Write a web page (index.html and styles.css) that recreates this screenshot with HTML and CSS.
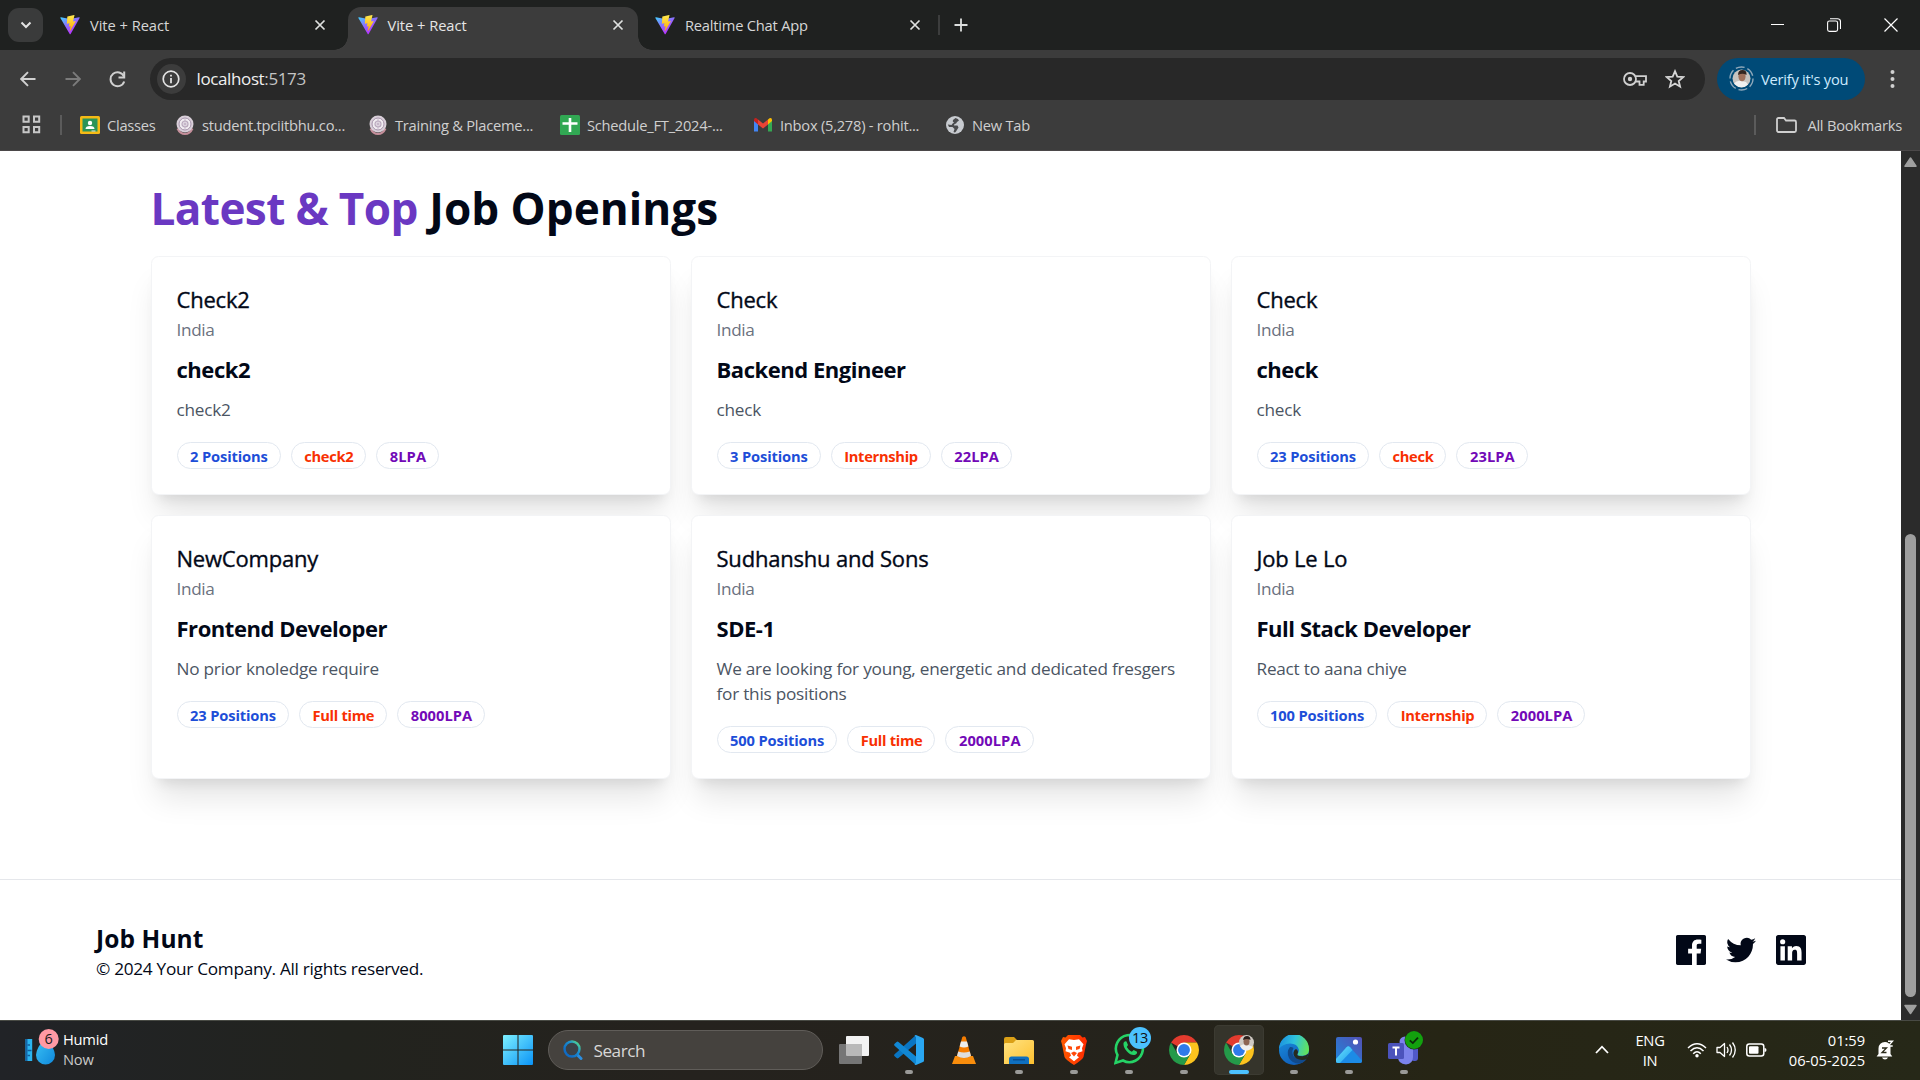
FILE: index.html
```
<!DOCTYPE html>
<html lang="en">
<head>
<meta charset="utf-8">
<title>Vite + React</title>
<link rel="stylesheet" href="styles.css">
</head>
<body>
<svg class="defs" width="0" height="0" aria-hidden="true">
  <defs>
    <linearGradient id="vite-a" x1="0" y1="0" x2="0.7" y2="1"><stop offset="0" stop-color="#41d1ff"/><stop offset="0.5" stop-color="#8f6bff"/><stop offset="1" stop-color="#c026ff"/></linearGradient>
    <linearGradient id="vite-b" x1="0" y1="0" x2="0" y2="1"><stop offset="0" stop-color="#ffea50"/><stop offset="1" stop-color="#ffa800"/></linearGradient>
    <linearGradient id="win" x1="0" y1="0" x2="1" y2="1"><stop offset="0" stop-color="#7df0ff"/><stop offset="1" stop-color="#0a93f7"/></linearGradient>
    <linearGradient id="lens" x1="1" y1="0" x2="0.2" y2="0.8"><stop offset="0" stop-color="#62ea7a"/><stop offset="0.45" stop-color="#1a8fd0"/><stop offset="1" stop-color="#0f6bc4"/></linearGradient>
    <linearGradient id="folder" x1="0" y1="0" x2="1" y2="1"><stop offset="0" stop-color="#ffe382"/><stop offset="1" stop-color="#fdc02f"/></linearGradient>
    <linearGradient id="brave" x1="0" y1="0" x2="1" y2="0"><stop offset="0" stop-color="#ff5a00"/><stop offset="1" stop-color="#ff2a00"/></linearGradient>
    <linearGradient id="edge-a" x1="0" y1="0.3" x2="1" y2="0.5"><stop offset="0" stop-color="#1b8fe0"/><stop offset="0.5" stop-color="#2fc3dc"/><stop offset="1" stop-color="#62e35c"/></linearGradient>
    <linearGradient id="edge-b" x1="0" y1="0" x2="0.6" y2="1"><stop offset="0" stop-color="#1b93e2"/><stop offset="1" stop-color="#0f5cb8"/></linearGradient>
    <linearGradient id="photo" x1="1" y1="0" x2="0" y2="1"><stop offset="0" stop-color="#5350b4"/><stop offset="1" stop-color="#1f86dc"/></linearGradient>
    <linearGradient id="hill" x1="0" y1="0" x2="1" y2="1"><stop offset="0" stop-color="#6fe4fb"/><stop offset="1" stop-color="#1a9df0"/></linearGradient>
    <linearGradient id="drop" x1="0" y1="0" x2="1" y2="1"><stop offset="0" stop-color="#3cc4f5"/><stop offset="1" stop-color="#0f88dc"/></linearGradient>
    <symbol id="vite" viewBox="0 0 32 32"><path d="M31.4 4.9 17 30.5c-.3.6-1.2.6-1.5 0L.6 4.9C.3 4.300.8 3.500 1.500 3.700l14.600 2.600 14.400-2.600c.7-.1 1.200.6.900 1.200z" fill="url(#vite-a)"/><path d="M22.700.1 12 2.200c-.2 0-.3.2-.3.400l-.700 11c0 .3.200.5.500.4l3-.7c.3-.1.500.2.500.5l-.900 4.300c-.1.3.200.5.500.4l1.800-.500c.3-.1.600.1.500.4l-1.400 6.800c-.1.400.5.700.7.300L25 10.200c.1-.3-.1-.6-.4-.6l-3.100.6c-.3.1-.5-.2-.5-.5l2.100-9.100c.1-.3-.1-.5-.4-.5z" fill="url(#vite-b)"/></symbol>
    <symbol id="x" viewBox="0 0 12 12"><path d="M1.500 1.500l9 9M10.500 1.500l-9 9" stroke="#dfe1e0" stroke-width="1.700" fill="none"/></symbol>
    <symbol id="seal" viewBox="0 0 20 20"><path d="M2.500 13.500Q5 19 10 19t7.500-5.500" fill="none" stroke="#c58f9b" stroke-width="2"/><circle cx="10" cy="9" r="8.500" fill="#d9cfd9"/><circle cx="10" cy="9" r="6" fill="#f1ecf1" stroke="#a693ab" stroke-width="1"/><circle cx="10" cy="9" r="3" fill="none" stroke="#b9a8bd" stroke-width="1.200"/><path d="M10 4v10M7 7l6 4M13 7l-6 4" stroke="#b9a8bd" stroke-width=".7"/></symbol>
    <symbol id="chrome" viewBox="0 0 48 48"><path d="M24 24 3.220 12A24 24 0 0 1 44.780 12H24z" fill="#e33b2e"/><path d="M24 12h20.780A24 24 0 0 1 24 48l10.390-18z" fill="#fcc31e"/><path d="M34.390 30 24 48A24 24 0 0 1 3.220 12l10.390 18z" fill="#249a49"/><circle cx="24" cy="24" r="12" fill="#fff"/><circle cx="24" cy="24" r="9.500" fill="#2f7bea"/></symbol>
  </defs>
</svg>

<header class="browser">
  <div class="tabstrip">
    <button class="tab-search"><svg width="12" height="8" viewBox="0 0 12 8"><path d="M1.500 1.500 6 6l4.500-4.500" fill="none" stroke="#e3e3e3" stroke-width="2"/></svg></button>
    <div class="tab"><svg class="favicon"><use href="#vite"/></svg><span class="tab-title">Vite + React</span><svg class="tab-close"><use href="#x"/></svg></div>
    <div class="tab tab-active"><svg class="favicon"><use href="#vite"/></svg><span class="tab-title">Vite + React</span><svg class="tab-close"><use href="#x"/></svg></div>
    <div class="tab"><svg class="favicon"><use href="#vite"/></svg><span class="tab-title tab-title-long">Realtime Chat App</span><svg class="tab-close"><use href="#x"/></svg></div>
    <div class="new-tab"><svg width="14" height="14" viewBox="0 0 14 14"><path d="M7 .5v13M.5 7h13" stroke="#dcdedd" stroke-width="1.800"/></svg></div>
    <div class="window-buttons">
      <svg width="14" height="14" viewBox="0 0 14 14"><path d="M1 6.500h13" stroke="#fff"/></svg>
      <svg width="14" height="14" viewBox="0 0 14 14"><rect x=".6" y="3" width="10" height="10.400" rx="1.800" fill="none" stroke="#fff" stroke-width="1.100"/><path d="M3 .7h7.500q3 0 3 3V11" fill="none" stroke="#fff" stroke-width="1.100"/></svg>
      <svg width="14" height="14" viewBox="0 0 14 14"><path d="M.5.5l13 13M13.500.5l-13 13" stroke="#fff" stroke-width="1.200"/></svg>
    </div>
  </div>

  <div class="toolbar">
    <div class="nav">
      <svg width="16" height="16" viewBox="0 0 16 16"><path d="M15.500 8H1.500M8 1.200 1.200 8 8 14.800" fill="none" stroke="#d0d0d0" stroke-width="1.900"/></svg>
      <svg width="16" height="16" viewBox="0 0 16 16"><path d="M.5 8h14M8 1.200 14.800 8 8 14.800" fill="none" stroke="#7b7b7b" stroke-width="1.900"/></svg>
      <svg width="17" height="17" viewBox="0 0 17 17"><path d="M15 5.500A7 7 0 1 0 15.200 10.500" fill="none" stroke="#d0d0d0" stroke-width="2"/><path d="M15.200.5v6H9.500" fill="none" stroke="#d0d0d0" stroke-width="2"/></svg>
    </div>
    <div class="address">
      <span class="site-info"><svg width="18" height="18" viewBox="0 0 18 18"><circle cx="9" cy="9" r="7.800" fill="none" stroke="#e3e3e3" stroke-width="1.700"/><path d="M9 8v5.200M9 4.700v1.800" stroke="#e3e3e3" stroke-width="1.800"/></svg></span>
      <span class="url">localhost<span class="port">:5173</span></span>
      <svg class="key" width="24" height="14" viewBox="0 0 24 14"><circle cx="7" cy="7" r="6" fill="none" stroke="#d0d0d0" stroke-width="1.800"/><circle cx="7" cy="7" r="2.200" fill="#d0d0d0"/><path d="M12.500 4.200H23v5.300h-2.300v3.300h-4.200V9.500h-4" fill="none" stroke="#d0d0d0" stroke-width="1.800"/></svg>
      <svg class="star" width="20" height="20" viewBox="0 0 20 20"><path d="M10 2.200l2.300 5.400 5.900.5-4.500 3.900 1.400 5.700-5.100-3.100-5.100 3.100 1.400-5.700L1.800 8.100l5.900-.5z" fill="none" stroke="#d5d5d5" stroke-width="1.800"/></svg>
    </div>
    <button class="profile">
      <svg width="25" height="25" viewBox="0 0 25 25"><circle cx="12.500" cy="12.500" r="11.500" fill="none" stroke="#8fa9bb" stroke-width="1.400" stroke-dasharray="9 3"/><circle cx="12.500" cy="12.500" r="9" fill="#c8c4c0"/><path d="M5 17.500Q8 14 12 15l5 1 2 2.500a9 9 0 0 1-13 0z" fill="#f0f0f0"/><ellipse cx="13" cy="10.500" rx="3.600" ry="4.800" fill="#a0705a"/><path d="M9 9q0-5 4.500-5T17.500 9q-4-2.500-8.500 0z" fill="#33251f"/></svg>
      <span>Verify it's you</span>
    </button>
    <svg class="dots" width="5" height="20" viewBox="0 0 5 20"><circle cx="2.500" cy="3" r="2" fill="#d0d0d0"/><circle cx="2.500" cy="10" r="2" fill="#d0d0d0"/><circle cx="2.500" cy="17" r="2" fill="#d0d0d0"/></svg>
  </div>

  <div class="bookmarks">
    <svg class="apps" width="19" height="19" viewBox="0 0 19 19"><path d="M1.500 1.500h5.200v5.200H1.500zM12 1.500h5.200v5.200H12zM1.500 12h5.200v5.200H1.500zM12 12h5.200v5.200H12z" fill="none" stroke="#c7c7c7" stroke-width="2"/></svg>
    <div class="bookmark-list">
      <div class="bookmark"><svg viewBox="0 0 20 20"><rect y="1" width="20" height="18" rx="1.500" fill="#f5ba15"/><rect x="2.500" y="3.500" width="15" height="13" fill="#2a9458"/><circle cx="10" cy="8" r="2.200" fill="#fff"/><path d="M5.500 14q0-3 4.500-3t4.500 3z" fill="#fff"/><path d="M11.500 15.500h4v1h-4z" fill="#e8e8e8"/></svg><span>Classes</span></div>
      <div class="bookmark"><svg viewBox="0 0 20 20"><use href="#seal"/></svg><span>student.tpciitbhu.co...</span></div>
      <div class="bookmark"><svg viewBox="0 0 20 20"><use href="#seal"/></svg><span>Training &amp; Placeme...</span></div>
      <div class="bookmark"><svg viewBox="0 0 20 20"><rect width="20" height="20" rx="1.500" fill="#31a853"/><path d="M10 3v14M2.500 8.500h15" stroke="#fff" stroke-width="2.600"/></svg><span>Schedule_FT_2024-...</span></div>
      <div class="bookmark"><svg viewBox="0 0 20 20"><path d="M1 5v11.500h4V8z" fill="#4285f4"/><path d="M19 5v11.500h-4V8z" fill="#34a853"/><path d="M1 6V5q0-2.500 2.500-1.700L5 4.500v5z" fill="#c5221f"/><path d="M19 6V5q0-2.500-2.500-1.700L15 4.500v5z" fill="#fbbc04"/><path d="M5 4.500l5 4 5-4v5l-5 4-5-4z" fill="#ea4335"/></svg><span>Inbox (5,278) - rohit...</span></div>
      <div class="bookmark"><svg viewBox="0 0 20 20"><circle cx="10" cy="10" r="9" fill="#c8cbd0"/><path d="M10.500 3q3 .5 3.500 2.500l-2 1.500q-.5 2-2.500 2L9 10.500h3.500l1 2-2.500 4Q10 18 8.500 17l1-3-2-2H4L2.800 9.500 6.500 10q1-2 2.500-2.500Q7 6.500 8 5z" fill="#4a4b4d"/></svg><span>New Tab</span></div>
    </div>
    <div class="all-bookmarks"><svg width="21" height="16" viewBox="0 0 21 16"><path d="M1 13V2.500Q1 1 2.500 1H8l2 2.500h8.500Q20 3.500 20 5v8.500q0 1.500-1.500 1.500H2.500Q1 15 1 13z" fill="none" stroke="#d0d0d0" stroke-width="1.800"/></svg><span>All Bookmarks</span></div>
  </div>
</header>

<div class="viewport">
  <div class="page">
    <main class="jobs">
      <h1 class="jobs-heading"><span class="accent">Latest &amp; Top</span> Job Openings</h1>
      <div class="job-grid">
        <article class="job"><h2 class="company">Check2</h2><p class="place">India</p><h3 class="role">check2</h3><p class="about">check2</p><div class="badges"><span class="badge positions">2 Positions</span><span class="badge kind">check2</span><span class="badge pay">8LPA</span></div></article>
        <article class="job"><h2 class="company">Check</h2><p class="place">India</p><h3 class="role">Backend Engineer</h3><p class="about">check</p><div class="badges"><span class="badge positions">3 Positions</span><span class="badge kind">Internship</span><span class="badge pay">22LPA</span></div></article>
        <article class="job"><h2 class="company">Check</h2><p class="place">India</p><h3 class="role">check</h3><p class="about">check</p><div class="badges"><span class="badge positions">23 Positions</span><span class="badge kind">check</span><span class="badge pay">23LPA</span></div></article>
        <article class="job"><h2 class="company">NewCompany</h2><p class="place">India</p><h3 class="role">Frontend Developer</h3><p class="about">No prior knoledge require</p><div class="badges"><span class="badge positions">23 Positions</span><span class="badge kind">Full time</span><span class="badge pay">8000LPA</span></div></article>
        <article class="job"><h2 class="company">Sudhanshu and Sons</h2><p class="place">India</p><h3 class="role">SDE-1</h3><p class="about">We are looking for young, energetic and dedicated fresgers for this positions</p><div class="badges"><span class="badge positions">500 Positions</span><span class="badge kind">Full time</span><span class="badge pay">2000LPA</span></div></article>
        <article class="job"><h2 class="company">Job Le Lo</h2><p class="place">India</p><h3 class="role">Full Stack Developer</h3><p class="about">React to aana chiye</p><div class="badges"><span class="badge positions">100 Positions</span><span class="badge kind">Internship</span><span class="badge pay">2000LPA</span></div></article>
      </div>
    </main>
    <footer class="footer">
      <div class="footer-text">
        <h2 class="brand">Job Hunt</h2>
        <p class="copyright">© 2024 Your Company. All rights reserved.</p>
      </div>
      <div class="social">
        <svg viewBox="0 0 24 24"><path d="M22.676 0H1.324C.593 0 0 .593 0 1.324v21.352C0 23.408.593 24 1.324 24h11.494v-9.294H9.689v-3.621h3.129V8.410c0-3.099 1.894-4.785 4.659-4.785 1.325 0 2.464.097 2.796.141v3.240h-1.921c-1.500 0-1.792.721-1.792 1.771v2.311h3.584l-.465 3.630H16.560V24h6.115c.733 0 1.325-.592 1.325-1.324V1.324C24 .593 23.408 0 22.676 0"/></svg>
        <svg viewBox="0 0 24 24"><path d="M24 4.557a9.930 9.930 0 0 1-2.828.775 4.932 4.932 0 0 0 2.165-2.724 9.864 9.864 0 0 1-3.127 1.195 4.916 4.916 0 0 0-8.380 4.482A13.944 13.944 0 0 1 1.671 3.149a4.916 4.916 0 0 0 1.523 6.574 4.903 4.903 0 0 1-2.229-.616c-.054 2.281 1.581 4.415 3.949 4.890a4.935 4.935 0 0 1-2.224.084 4.928 4.928 0 0 0 4.600 3.419A9.900 9.900 0 0 1 0 19.540a13.940 13.940 0 0 0 7.548 2.212c9.142 0 14.307-7.721 13.995-14.646A10.025 10.025 0 0 0 24 4.557z"/></svg>
        <svg viewBox="0 0 24 24"><path d="M20.447 20.452h-3.554v-5.569c0-1.328-.027-3.037-1.852-3.037-1.853 0-2.136 1.445-2.136 2.939v5.667H9.351V9h3.414v1.561h.046c.477-.9 1.637-1.850 3.370-1.850 3.601 0 4.267 2.370 4.267 5.455v6.286zM5.337 7.433a2.062 2.062 0 1 1 0-4.124 2.062 2.062 0 0 1 0 4.124zM7.114 20.452H3.558V9h3.556v11.452zM22.225 0H1.771C.792 0 0 .774 0 1.729v20.542C0 23.227.792 24 1.771 24h20.451C23.200 24 24 23.227 24 22.271V1.729C24 .774 23.200 0 22.222 0h.003z"/></svg>
      </div>
    </footer>
  </div>
  <div class="scrollbar">
    <svg width="13" height="11" viewBox="0 0 13 11"><path d="M6.500 1 12 9.200H1z" fill="#9f9f9f" stroke="#9f9f9f" stroke-width="1.500" stroke-linejoin="round"/></svg>
    <span class="thumb"></span>
    <svg width="13" height="11" viewBox="0 0 13 11"><path d="M6.500 9.500 12 1.500H1z" fill="#9f9f9f" stroke="#9f9f9f" stroke-width="1.500" stroke-linejoin="round"/></svg>
  </div>
</div>

<div class="taskbar">
  <div class="weather">
    <svg width="36" height="40" viewBox="0 0 36 40"><rect x="1.500" y="10" width="6.700" height="22" fill="#2bb5f0"/><path d="M1.500 10h2v22h-2z" fill="#1565a8"/><path d="M3.500 16H6M3.500 21.500h4M3.500 26.500H6" stroke="#11609f" stroke-width="1.300"/><path d="M21.500 8q-9.500 11.500-9.500 18a9.500 9.500 0 0 0 19 0Q31 19.500 21.500 8z" fill="url(#drop)"/><circle cx="24.700" cy="10" r="10" fill="#ff99a4"/><text class="count" x="24.500" y="15" fill="#1a1a1a">6</text></svg>
    <div class="weather-text"><span>Humid</span><span class="dim">Now</span></div>
  </div>
  <div class="apps-row">
    <svg class="start" width="30" height="30" viewBox="0 0 29 29"><path d="M0 1q0-1 1-1h13v14H0zM15 0h13q1 0 1 1v13H15zM0 15h14v14H1q-1 0-1-1zM15 15h14v13q0 1-1 1H15z" fill="url(#win)"/></svg>
    <div class="search"><svg width="20" height="20" viewBox="0 0 20 20"><path d="M13.500 14 18 18.500" stroke="#2b8ee0" stroke-width="3" stroke-linecap="round"/><circle cx="9" cy="9" r="7.500" fill="#3b4147" stroke="url(#lens)" stroke-width="2.400"/></svg><span>Search</span></div>
    <div class="app"><svg viewBox="0 0 30 30"><path d="M8 1h21q1 0 1 1v18q0 1-1 1H8q-1 0-1-1V2q0-1 1-1z" fill="#f2f2f2"/><rect y="9" width="23" height="20" rx="1" fill="#767676"/><path d="M7 9h16v12H8q-1 0-1-1z" fill="#b9b9b9"/></svg></div>
    <div class="app running"><svg viewBox="0 0 30 30"><path d="M22 0v8.500L4.500 23q-1 .8-1.900 0l-2-1.800q-1-.9 0-1.900z" fill="#0a75c2"/><path d="M22 30v-8.500L4.500 7q-1-.8-1.900 0l-2 1.800q-1 .9 0 1.900z" fill="#1187d4"/><path d="M22 0l7 3q1 .6 1 1.500v21q0 1-1 1.500l-7 3q-1 0-1.500-.8L22 28V2l-1.500-1.200Q21 0 22 0z" fill="#2aa7f2"/></svg></div>
    <div class="app"><svg viewBox="0 0 30 30"><path d="M6 21h18l3 8H3z" fill="#f98d0c"/><path d="M13.300 2q1.700-1.500 3.400 0L22 21q-7 4.500-14 0z" fill="#f57c00"/><path d="M12 6.500h6l1.400 5q-4.400 1.800-8.800 0z" fill="#ececec"/><path d="M9.200 16.500q5.800 2 11.600 0L22 21q-7 4-14 0z" fill="#dedede"/></svg></div>
    <div class="app running"><svg viewBox="0 0 30 30"><path d="M0 4q0-2 2-2h8l3 3-2 5H0z" fill="#dba016"/><path d="M12 5h16.500Q30 5 30 6.500V29H0V9.500Q0 8 1.500 8H9z" fill="url(#folder)"/><path d="M5 29v-5q0-2.500 2.500-2.500h15Q25 21.500 25 24v5z" fill="#0f70c0"/><path d="M9 24.800h12" stroke="#0a4a8c" stroke-width="1.300"/></svg></div>
    <div class="app running"><svg viewBox="0 0 30 30"><path d="M9 0h12l2.500 2.500 2.500-.5L28 6l-1 3.500-2.500 12.500Q23 25 15 30 7 25 5.500 22L3 9.500 2 6l2-4 2.500.5z" fill="url(#brave)"/><path d="M15 5l5-.8 4.500 5-1.500 4 .5 3-4.500 1.500-1 3 2 1.500-5 4-5-4 2-1.500-1-3L6.500 16.200l.5-3-1.500-4 4.500-5z" fill="#fff"/><path d="M8.500 10.500l4.500 1.200v3.300l-3.500-1zM21.500 10.500 17 11.700V15l3.500-1zM12 18l3-1.500 3 1.500-3 3.500z" fill="#ff4a0a"/></svg></div>
    <div class="app running"><svg class="wide" viewBox="0 0 38 38"><path d="M1.500 36.500l2-8a13.500 13.500 0 1 1 5.500 5.500z" transform="translate(0 -.5)" fill="none" stroke="#25d366" stroke-width="2.600"/><path d="M9.500 16q1-2.300 3-1.500l1.500 3.500-1.200 2q1.700 3.200 5 4.700l1.900-1.700 3.300 1.700q.5 2.500-2.500 3.300-4 .5-7.500-3.500-4-4-3.500-8.500z" fill="#25d366"/><circle cx="26" cy="11" r="11" fill="#4cc2ff"/><text class="count" x="26" y="16" fill="#111">13</text></svg></div>
    <div class="app running"><svg viewBox="0 0 30 30"><use href="#chrome"/></svg></div>
    <div class="app running focused"><svg viewBox="0 0 30 30"><use href="#chrome"/><circle cx="22.500" cy="7.500" r="7.500" fill="#cfcac4"/><path d="M16 11q3-2.500 6-1.500l5 1.500 2 1a7.500 7.500 0 0 1-11 2z" fill="#f0efee"/><ellipse cx="22.500" cy="6.500" rx="3" ry="4" fill="#8d6553"/><path d="M19 5q.5-4 4-4t3.500 4q-3.500-2-7.500 0z" fill="#2b201c"/></svg></div>
    <div class="app running"><svg viewBox="0 0 30 30"><circle cx="15" cy="15" r="15" fill="url(#edge-b)"/><path d="M0 14A15 15 0 0 1 30 14q.5 6.500-6.500 6.800-5.500.2-5-1.800 1.800-2 1.300-4.500Q18.500 8.500 11 8.500 3 9 0 14z" fill="url(#edge-a)"/><path d="M11 12q-4 5-1 11 4 7 13 5 3-1.300 5-4.500-6.500 2.500-12-1-4.500-3.500-1.500-9.500-2-1.500-3.500-1z" fill="#114a8b"/><path d="M18.500 19q-1.500 2.200 5 2.200 4-.2 5.900-2.600L28 24q-6 2-10.500-.5-3.500-2.500-3-6 .5-3 2.500-3.500 3 2 1.500 5z" fill="#262a1e"/></svg></div>
    <div class="app running"><svg viewBox="0 0 30 30"><rect x="2" y="2" width="26" height="26" rx="2" fill="url(#photo)"/><path d="M2 24 12.500 12.200q1.800-1.700 3.600 0L28 25.500V26q0 2-2 2H4q-2 0-2-2z" fill="#1c8be6"/><path d="M2 24 12.500 12.200q1.800-1.700 3.600 0l2.400 2.700L6 28H4q-2 0-2-2z" fill="url(#hill)"/><circle cx="21.500" cy="7" r="2.600" fill="#fff"/></svg></div>
    <div class="app running"><svg class="teams" viewBox="0 0 38 34"><circle cx="18" cy="11" r="5.500" fill="#7b83eb"/><rect x="24" y="15" width="7" height="15" rx="3" fill="#5059c9"/><path d="M11 15h15v11q0 7-7 7.500-8-.5-8-7.500z" fill="#7b83eb"/><rect x="1" y="12" width="16" height="16" rx="1.500" fill="#4b53bc"/><path d="M5.500 16.500h7M9 16.500v8" stroke="#fff" stroke-width="2"/><circle cx="27" cy="9" r="9.500" fill="#23241a"/><circle cx="27" cy="9" r="9" fill="#13a10e"/><path d="M22.800 9.300l3 2.800 5.200-5.500" fill="none" stroke="#0b2b09" stroke-width="1.800"/></svg></div>
  </div>
  <div class="tray">
    <svg class="tray-more" width="14" height="9" viewBox="0 0 14 9"><path d="M1 8l6-6.300L13 8" fill="none" stroke="#fff" stroke-width="1.800"/></svg>
    <div class="lang"><span>ENG</span><span>IN</span></div>
    <div class="status">
      <svg width="20" height="16" viewBox="0 0 20 16"><path d="M1 6q9-8.500 18 0M3.500 9q6.500-6.500 13 0M6.200 11.800q3.800-4 7.600 0" fill="none" stroke="#fff" stroke-width="1.500"/><circle cx="10" cy="13.800" r="1.700" fill="#fff"/></svg>
      <svg width="21" height="18" viewBox="0 0 21 18"><path d="M1 6.500h3L8.500 2.500v13L4 11.500H1z" fill="none" stroke="#fff" stroke-width="1.300" stroke-linejoin="round"/><path d="M11 6q2 3 0 6M13.500 3.500q4 5.500 0 11M16.500 1.500q5.500 7.500 0 15" fill="none" stroke="#fff" stroke-width="1.300"/></svg>
      <svg width="21" height="14" viewBox="0 0 21 14"><rect x=".8" y="1" width="17" height="12" rx="2.500" fill="none" stroke="#fff" stroke-width="1.500"/><rect x="3" y="3.200" width="9.500" height="7.600" rx="1" fill="#fff"/><path d="M18.500 5q2 0 2 2t-2 2z" fill="#fff"/></svg>
    </div>
    <div class="clock"><span>01:59</span><span>06-05-2025</span></div>
    <svg class="bell" width="18" height="20" viewBox="0 0 18 20"><path d="M2.500 14V8.500Q3 2 9 2q4 0 5.500 4v8l1.800 2.500H.6z" fill="#fff"/><path d="M6 17.500h6q-.8 2-3 2t-3-2z" fill="#fff"/><path d="M6 8h4.500L6 12.500h4.500" fill="none" stroke="#2a2a1a" stroke-width="1.300"/><path d="M12 1.200h4.500L12.200 6h4.500" fill="none" stroke="#fff" stroke-width="1.400"/></svg>
  </div>
</div>
</body>
</html>
```
FILE: styles.css
```
* { box-sizing: border-box; }

body {
  margin: 0;
  width: 1920px;
  height: 1080px;
  overflow: hidden;
  display: flex;
  flex-direction: column;
  background: #fff;
  font-family: "Open Sans", "Noto Sans", sans-serif;
  font-size: 14.7px;
  letter-spacing: -0.25px;
}
h1, h2, h3, p { margin: 0; }
svg { display: block; flex: none; }
button { border: 0; padding: 0; font: inherit; letter-spacing: inherit; }
.defs { position: absolute; }

/* Browser chrome */
.browser { height: 151px; background: #3c3c3c; border-bottom: 1px solid #4b4849; color: #d6d6d6; }

.tabstrip { display: flex; align-items: center; height: 50px; padding-left: 8px; background: #1f2120; }
.tab-search { display: flex; align-items: center; justify-content: center; width: 35px; height: 34px; margin-right: 7px; border-radius: 11px; background: #3a3b3b; }
.tab { position: relative; display: flex; align-items: center; width: 290px; height: 50px; margin-right: 7.5px; padding: 0 14px 0 10px; }
.favicon { width: 20px; height: 20px; }
.tab-title { flex: 1; margin-left: 10px; letter-spacing: -0.05px; }
.tab-title-long { letter-spacing: -0.22px; }
.tab-close { width: 12px; height: 12px; }
.tab-active { height: 43px; margin-top: 7px; padding-bottom: 7px; border-radius: 13px 13px 0 0; background: #3c3c3c; color: #e6e6e6; }
.tab-active::before, .tab-active::after { content: ""; position: absolute; bottom: 0; width: 14px; height: 14px; }
.tab-active::before { right: 100%; background: radial-gradient(circle at 0 0, transparent 13.5px, #3c3c3c 14px); }
.tab-active::after { left: 100%; background: radial-gradient(circle at 100% 0, transparent 13.5px, #3c3c3c 14px); }
.new-tab { display: flex; align-items: center; height: 20px; margin-left: -5px; padding-left: 14px; border-left: 2px solid #3c3d3d; }
.window-buttons { display: flex; gap: 43px; margin-left: auto; padding-right: 22px; }

.toolbar { display: flex; align-items: center; height: 58px; background: #3c3c3c; }
.nav { display: flex; align-items: center; gap: 28.5px; width: 150px; padding-left: 20px; }
.address { display: flex; align-items: center; width: 1555px; height: 42px; border-radius: 21px; padding: 0 20px 0 6.500px; background: #282828; }
.site-info { display: flex; align-items: center; justify-content: center; width: 29px; height: 30px; border-radius: 50%; background: #3c3c3c; }
.url { flex: 1; margin-left: 11px; padding-bottom: 1px; font-size: 17px; letter-spacing: -0.38px; color: #f0f0f0; }
.port { color: #c4c4c4; }
.star { margin-left: 18px; }
.profile { display: flex; align-items: center; gap: 7px; width: 148px; height: 42px; margin-left: 12px; padding: 0 0 1px 12px; border-radius: 21px; background: #004a77; color: #cdebff; }
.dots { margin-left: 25px; }

.bookmarks { display: flex; align-items: center; height: 34px; padding: 0 18px 1px 22px; color: #cfcfcf; }
.bookmark-list { display: grid; grid-template-columns: 95px 193px 192px 193px 192px auto; align-items: center; height: 20px; margin-left: 19px; padding-left: 18px; border-left: 2px solid #5b5b5b; }
.bookmark { display: flex; align-items: center; gap: 7px; white-space: nowrap; }
.bookmark svg { width: 20px; height: 20px; }
.all-bookmarks { display: flex; align-items: center; gap: 10px; height: 20px; margin-left: auto; padding-left: 20px; border-left: 2px solid #5b5b5b; }

/* Page */
.viewport { display: flex; height: 869px; }
.page { width: 1901px; display: flex; flex-direction: column; }
.jobs { width: 1600px; margin: 0 auto; padding-top: 30px; flex: 1; }
.jobs-heading { height: 50px; padding-top: 2px; font-size: 44.1px; line-height: 50px; font-weight: 700; letter-spacing: 0.02px; color: #020817; }
.accent { letter-spacing: -0.6px; color: #6a38c2; }
.job-grid { display: grid; grid-template-columns: repeat(3, 1fr); gap: 20px; margin-top: 25px; }
.job { padding: 25px; border: 1px solid #f3f4f6; border-radius: 7.5px; background: #fff; box-shadow: 0 25px 31.25px -6.25px rgb(0 0 0 / 0.1), 0 10px 12.5px -7.5px rgb(0 0 0 / 0.1); color: #020817; }
.company { font-size: 22px; line-height: 35px; font-weight: 400; letter-spacing: -0.2px; -webkit-text-stroke: 0.35px; }
.place { padding-top: 1px; font-size: 17.2px; line-height: 24px; letter-spacing: -0.35px; color: #6b7280; }
.role { margin: 10px 0; font-size: 22px; line-height: 35px; font-weight: 700; letter-spacing: -0.46px; }
.about { font-size: 17.2px; line-height: 25px; letter-spacing: -0.23px; color: #4b5563; }
.badges { display: flex; gap: 10px; margin-top: 20px; }
.badge { height: 27px; padding: 1px 12px 0 12.5px; border: 1px solid #e2e8f0; border-radius: 14px; font-size: 14.7px; line-height: 25px; font-weight: 700; white-space: nowrap; }
.positions { letter-spacing: -0.14px; color: #1d4ed8; }
.kind { letter-spacing: -0.3px; color: #f83002; }
.pay { letter-spacing: 0.05px; color: #7209b7; }

.footer { display: flex; align-items: center; justify-content: space-between; height: 141px; padding: 0 95px 0 96px; border-top: 1px solid #e5e7eb; color: #020817; }
.footer-text { padding-top: 2px; }
.brand { font-size: 24.5px; line-height: 35px; font-weight: 700; letter-spacing: 0.1px; }
.copyright { font-size: 17.2px; line-height: 25px; letter-spacing: -0.28px; }
.social { display: flex; gap: 20px; }
.social svg { width: 30px; height: 30px; fill: #020817; }

.scrollbar { display: flex; flex-direction: column; align-items: center; width: 19px; padding: 6px 0 5px; background: #2b2b2b; }
.thumb { width: 11px; height: 463px; margin: auto 0 7px; border-radius: 6px; background: #9f9f9f; }

/* Taskbar */
.taskbar { display: flex; align-items: center; height: 60px; border-top: 1px solid #484a44; background: linear-gradient(90deg, #212327, #22231e 18%, #25221e 36%, #25231b 62%, #262515 75%, #262818); color: #fff; }
.weather { display: flex; align-items: center; width: 502.5px; padding: 0 0 4px 24px; gap: 3px; }
.weather-text, .lang, .clock { display: flex; flex-direction: column; line-height: 20px; }
.dim { color: #c9c9c8; }
.count { font-size: 14.500px; letter-spacing: -0.4px; text-anchor: middle; }
.apps-row { display: flex; align-items: center; flex: none; padding-bottom: 1px; }
.start { margin-right: 15px; }
.search { display: flex; align-items: center; gap: 11px; width: 275px; height: 40px; margin-right: 6px; padding-left: 14px; border: 1px solid #605d59; border-radius: 20px; background: #45423e; color: #d8d7d6; font-size: 17.200px; letter-spacing: -0.5px; }
.app { position: relative; display: flex; align-items: center; justify-content: center; width: 50px; height: 50px; margin-right: 5px; border-radius: 5px; }
.app svg { width: 30px; height: 30px; }
.app .wide { width: 38px; height: 38px; margin: -8px -8px 0 0; }
.app .teams { width: 38px; height: 34px; margin: -5px 0 0 4px; }
.running::after { content: ""; position: absolute; bottom: 1px; left: 21px; width: 8px; height: 4px; border-radius: 2px; background: #9a9a98; }
.focused { background: #35342b; box-shadow: inset 0 0 0 1px #3c3b32; }
.focused::after { left: 15px; width: 20px; background: #4cc2ff; }
.tray { display: flex; align-items: center; margin-left: auto; padding: 0 26px 2px 0; }
.lang { align-items: center; width: 40px; margin-left: 21px; }
.status { display: flex; align-items: center; gap: 9px; margin-left: 17px; }
.clock { align-items: flex-end; width: 98px; letter-spacing: -0.05px; }
.bell { margin-left: 11px; }
```
